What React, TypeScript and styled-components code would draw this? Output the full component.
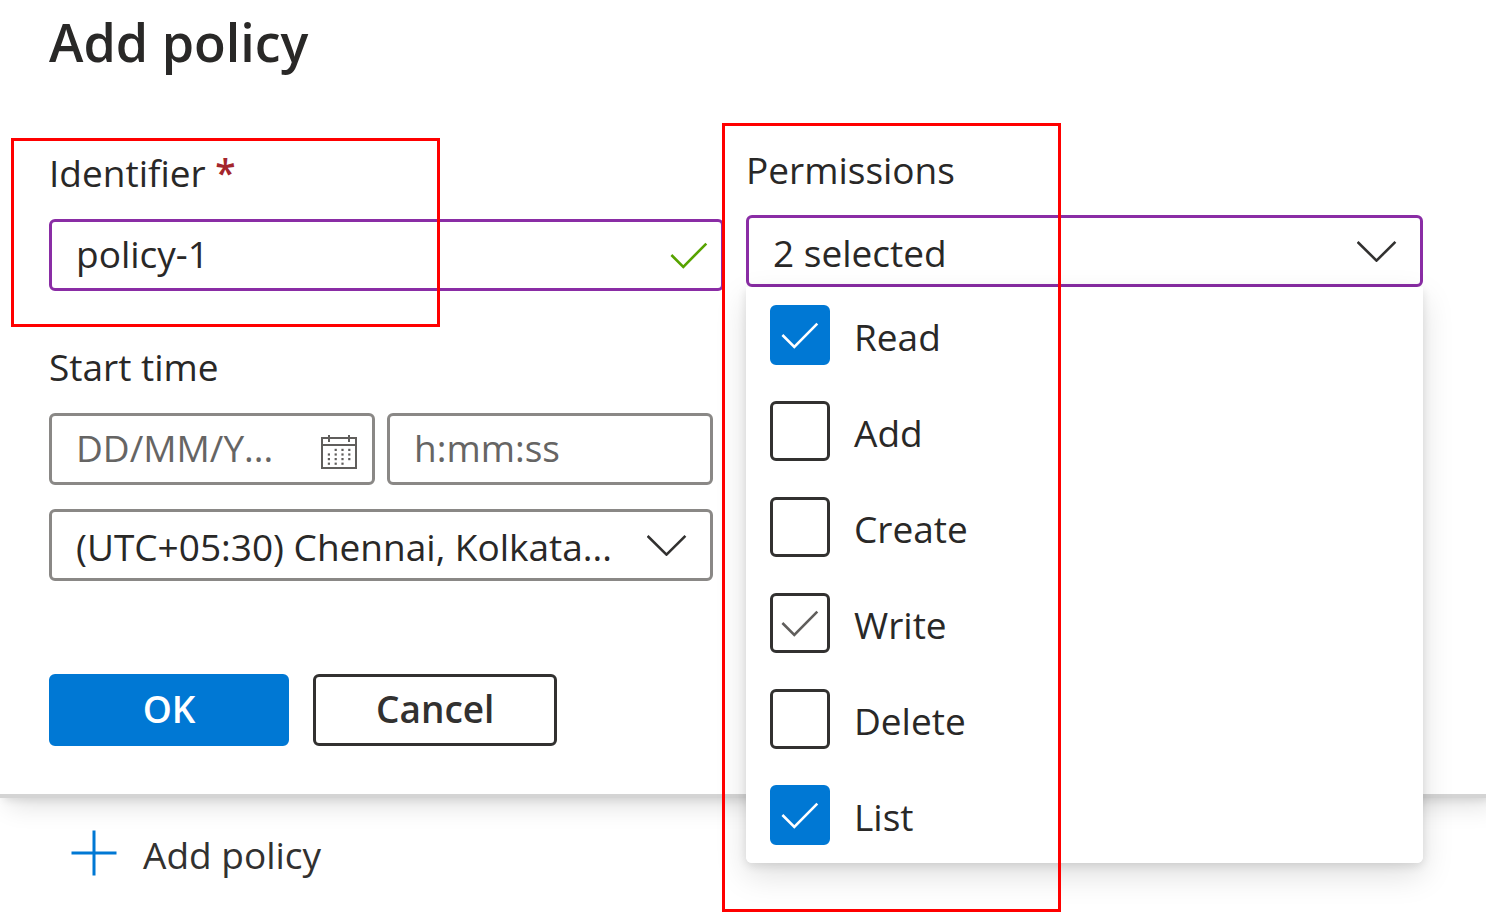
import React, { useState } from "react";
import styled, { createGlobalStyle } from "styled-components";

const ink = "#292827";
const purple = "#8a2da5";
const blue = "#0078d4";
const grey = "#8a8886";

const GlobalStyle = createGlobalStyle`
  *, *::before, *::after { box-sizing: border-box; }
  body {
    margin: 0;
    background: #ffffff;
    color: ${ink};
    font-family: "Segoe UI", "Open Sans", "Noto Sans", sans-serif;
    font-size: 37px;
    line-height: 52px;
  }
  #root { overflow-x: clip; }
  input, select, button { font: inherit; color: inherit; }
`;

const Panel = styled.form`
  position: relative;
  z-index: 1;
  padding: 14px 63px 48px 49px;
  background: #ffffff;
  border-bottom: 4px solid #d4d4d4;
  box-shadow: 8px 8px 24px rgba(0, 0, 0, 0.12), 4px 2px 8px rgba(0, 0, 0, 0.1);
`;

const Title = styled.h1`
  margin: 0;
  font-size: 52px;
  line-height: 56px;
  font-weight: 600;
`;

const Columns = styled.div`
  display: grid;
  grid-template-columns: minmax(0, 1fr) minmax(0, 1fr);
  column-gap: 20px;
  padding-top: 74px;
`;

const LeftColumn = styled.div`
  display: flex;
  flex-direction: column;
  padding: 3px 2px 0 0;
`;

const Field = styled.div`
  position: relative;
  display: flex;
  flex-direction: column;
`;

const Label = styled.label<{ $gap?: number }>`
  padding-bottom: ${(p) => p.$gap ?? 19}px;
`;

const Required = styled.span`
  color: #a4262c;
  font-weight: 600;
`;

const Control = styled.div`
  position: relative;
  display: flex;
  min-width: 0;
  flex: 1;
`;

const TextBox = styled.input<{ $active?: boolean }>`
  width: 100%;
  height: 72px;
  padding: 0 24px 4px;
  border: 3px solid ${(p) => (p.$active ? purple : grey)};
  border-radius: 6px;
  background: #ffffff;
  outline: none;
  &::placeholder { color: #666564; opacity: 1; }
`;

const Dropdown = styled.select<{ $active?: boolean }>`
  appearance: none;
  width: 100%;
  height: 72px;
  padding: 3px 80px 0 24px;
  border: 3px solid ${(p) => (p.$active ? purple : grey)};
  border-radius: 6px;
  background: #ffffff;
  outline: none;
`;

const ControlIcon = styled.span<{ $right: number }>`
  position: absolute;
  top: 0;
  bottom: 0;
  right: ${(p) => p.$right}px;
  display: flex;
  align-items: center;
  pointer-events: none;
`;

const TimeGroup = styled.fieldset`
  display: flex;
  flex-direction: column;
  gap: 24px;
  min-width: 0;
  margin: 50px 11px 0 0;
  padding: 0;
  border: 0;
`;

const Legend = styled.legend`
  padding: 0 0 20px;
`;

const TimeRow = styled.div`
  display: flex;
  gap: 12px;
`;

const Actions = styled.div`
  display: flex;
  gap: 24px;
  padding-top: 93px;
`;

const Button = styled.button<{ $primary?: boolean }>`
  min-width: 240px;
  height: 72px;
  padding: 0 60px 3px;
  border: 3px solid ${(p) => (p.$primary ? blue : "#323130")};
  border-radius: 6px;
  background: ${(p) => (p.$primary ? blue : "#ffffff")};
  color: ${(p) => (p.$primary ? "#ffffff" : "#323130")};
  font-weight: 600;
`;

const Menu = styled.fieldset`
  position: absolute;
  top: 100%;
  left: 0;
  right: 0;
  display: flex;
  flex-direction: column;
  gap: 36px;
  margin: 0;
  padding: 18px 24px;
  border: 0;
  border-radius: 0 0 6px 6px;
  background: #ffffff;
  box-shadow: 0 12px 32px rgba(0, 0, 0, 0.13), 0 3px 10px rgba(0, 0, 0, 0.11);
`;

const Option = styled.label`
  display: flex;
  align-items: center;
  gap: 24px;
  height: 60px;
`;

const OptionText = styled.span`
  padding-top: 3px;
`;

const Tick = styled.span`
  display: grid;
  place-items: center;
  > * { grid-area: 1 / 1; }
  svg { pointer-events: none; }
`;

const Box = styled.input`
  appearance: none;
  width: 60px;
  height: 60px;
  margin: 0;
  border: 3px solid #323130;
  border-radius: 6px;
  background: #ffffff;
  &:checked { background: ${blue}; border-color: ${blue}; }
`;

const Highlight = styled.div<{ $top: number; $left: number; $width: number; $height: number }>`
  position: absolute;
  z-index: 2;
  top: ${(p) => p.$top}px;
  left: ${(p) => p.$left}px;
  width: ${(p) => p.$width}px;
  height: ${(p) => p.$height}px;
  border: 3px solid #ff0000;
  pointer-events: none;
`;

const AddRow = styled.div`
  display: flex;
  padding: 31px 71px 35px;
`;

const AddButton = styled.button`
  display: flex;
  align-items: center;
  gap: 26px;
  padding: 0;
  border: 0;
  background: none;
  color: #323130;
`;

const CheckIcon = ({ color }: { color: string }) => (
  <svg width="38" height="28" viewBox="0 0 38 28" fill="none" stroke={color} strokeWidth="2.6" aria-hidden="true">
    <path d="M1.4 14 13.3 25.8 36.3 2.6" />
  </svg>
);

const ChevronIcon = () => (
  <svg width="40" height="22" viewBox="0 0 40 22" fill="none" stroke="#323130" strokeWidth="2.6" aria-hidden="true">
    <path d="M0.6 1.9 19.5 20.6 38.4 1.9" />
  </svg>
);

const calendarDots = [
  [1, 2, 3],
  [0, 1, 2, 3],
  [0, 1, 2, 3],
  [0, 1, 2],
];

const CalendarIcon = () => (
  <svg width="36" height="40" viewBox="0 -6 36 40" fill="none" stroke="#605e5c" strokeWidth="2" aria-hidden="true">
    <path d="M1 3h34v30H1zM1 10h34M8 0v7M28 0v7" />
    {calendarDots.map((cols, row) =>
      cols.map((col) => (
        <rect
          key={`${row}-${col}`}
          x={6.8 + col * 6.8}
          y={13.8 + row * 4.6}
          width="2.2"
          height="2.2"
          fill="#605e5c"
          stroke="none"
        />
      ))
    )}
  </svg>
);

const PlusIcon = () => (
  <svg width="46" height="50" viewBox="0 0 46 50" fill="none" stroke={blue} strokeWidth="3" aria-hidden="true">
    <path d="M0.5 23h45M23 0.5v45" />
  </svg>
);

const permissions = ["Read", "Add", "Create", "Write", "Delete", "List"];

export default function App() {
  const [identifier, setIdentifier] = useState("policy-1");
  const [selected, setSelected] = useState<string[]>(["Read", "List"]);
  const [hovered, setHovered] = useState("Write");

  const toggle = (name: string) =>
    setSelected((s) => (s.includes(name) ? s.filter((n) => n !== name) : [...s, name]));

  return (
    <>
      <GlobalStyle />
      <Panel onSubmit={(e) => e.preventDefault()}>
        <Title>Add policy</Title>
        <Columns>
          <LeftColumn>
            <Field>
              <Label htmlFor="identifier" $gap={20}>
                Identifier <Required>*</Required>
              </Label>
              <Control>
                <TextBox
                  id="identifier"
                  $active
                  required
                  value={identifier}
                  onChange={(e) => setIdentifier(e.target.value)}
                />
                <ControlIcon $right={16}>
                  <CheckIcon color="#57a300" />
                </ControlIcon>
              </Control>
              <Highlight $top={-9} $left={-38} $width={429} $height={189} />
            </Field>
            <TimeGroup>
              <Legend>Start time</Legend>
              <TimeRow>
                <Control>
                  <TextBox aria-label="Start date" placeholder="DD/MM/Y..." />
                  <ControlIcon $right={18}>
                    <CalendarIcon />
                  </ControlIcon>
                </Control>
                <Control>
                  <TextBox aria-label="Start time of day" placeholder="h:mm:ss" />
                </Control>
              </TimeRow>
              <Control>
                <Dropdown aria-label="Time zone">
                  <option>(UTC+05:30) Chennai, Kolkata...</option>
                </Dropdown>
                <ControlIcon $right={26}>
                  <ChevronIcon />
                </ControlIcon>
              </Control>
            </TimeGroup>
          </LeftColumn>
          <div>
            <Field>
              <Label htmlFor="permissions">Permissions</Label>
              <Control>
                <Dropdown id="permissions" $active>
                  <option>{selected.length} selected</option>
                </Dropdown>
                <ControlIcon $right={26}>
                  <ChevronIcon />
                </ControlIcon>
              </Control>
              <Menu aria-label="Permissions">
                {permissions.map((name) => {
                  const checked = selected.includes(name);
                  return (
                    <Option key={name} onMouseEnter={() => setHovered(name)}>
                      <Tick>
                        <Box type="checkbox" checked={checked} onChange={() => toggle(name)} />
                        {(checked || hovered === name) && (
                          <CheckIcon color={checked ? "#ffffff" : "#605e5c"} />
                        )}
                      </Tick>
                      <OptionText>{name}</OptionText>
                    </Option>
                  );
                })}
              </Menu>
              <Highlight $top={-21} $left={-24} $width={339} $height={789} />
            </Field>
          </div>
        </Columns>
        <Actions>
          <Button type="submit" $primary>
            OK
          </Button>
          <Button type="button">Cancel</Button>
        </Actions>
      </Panel>
      <AddRow>
        <AddButton type="button">
          <PlusIcon />
          Add policy
        </AddButton>
      </AddRow>
    </>
  );
}
